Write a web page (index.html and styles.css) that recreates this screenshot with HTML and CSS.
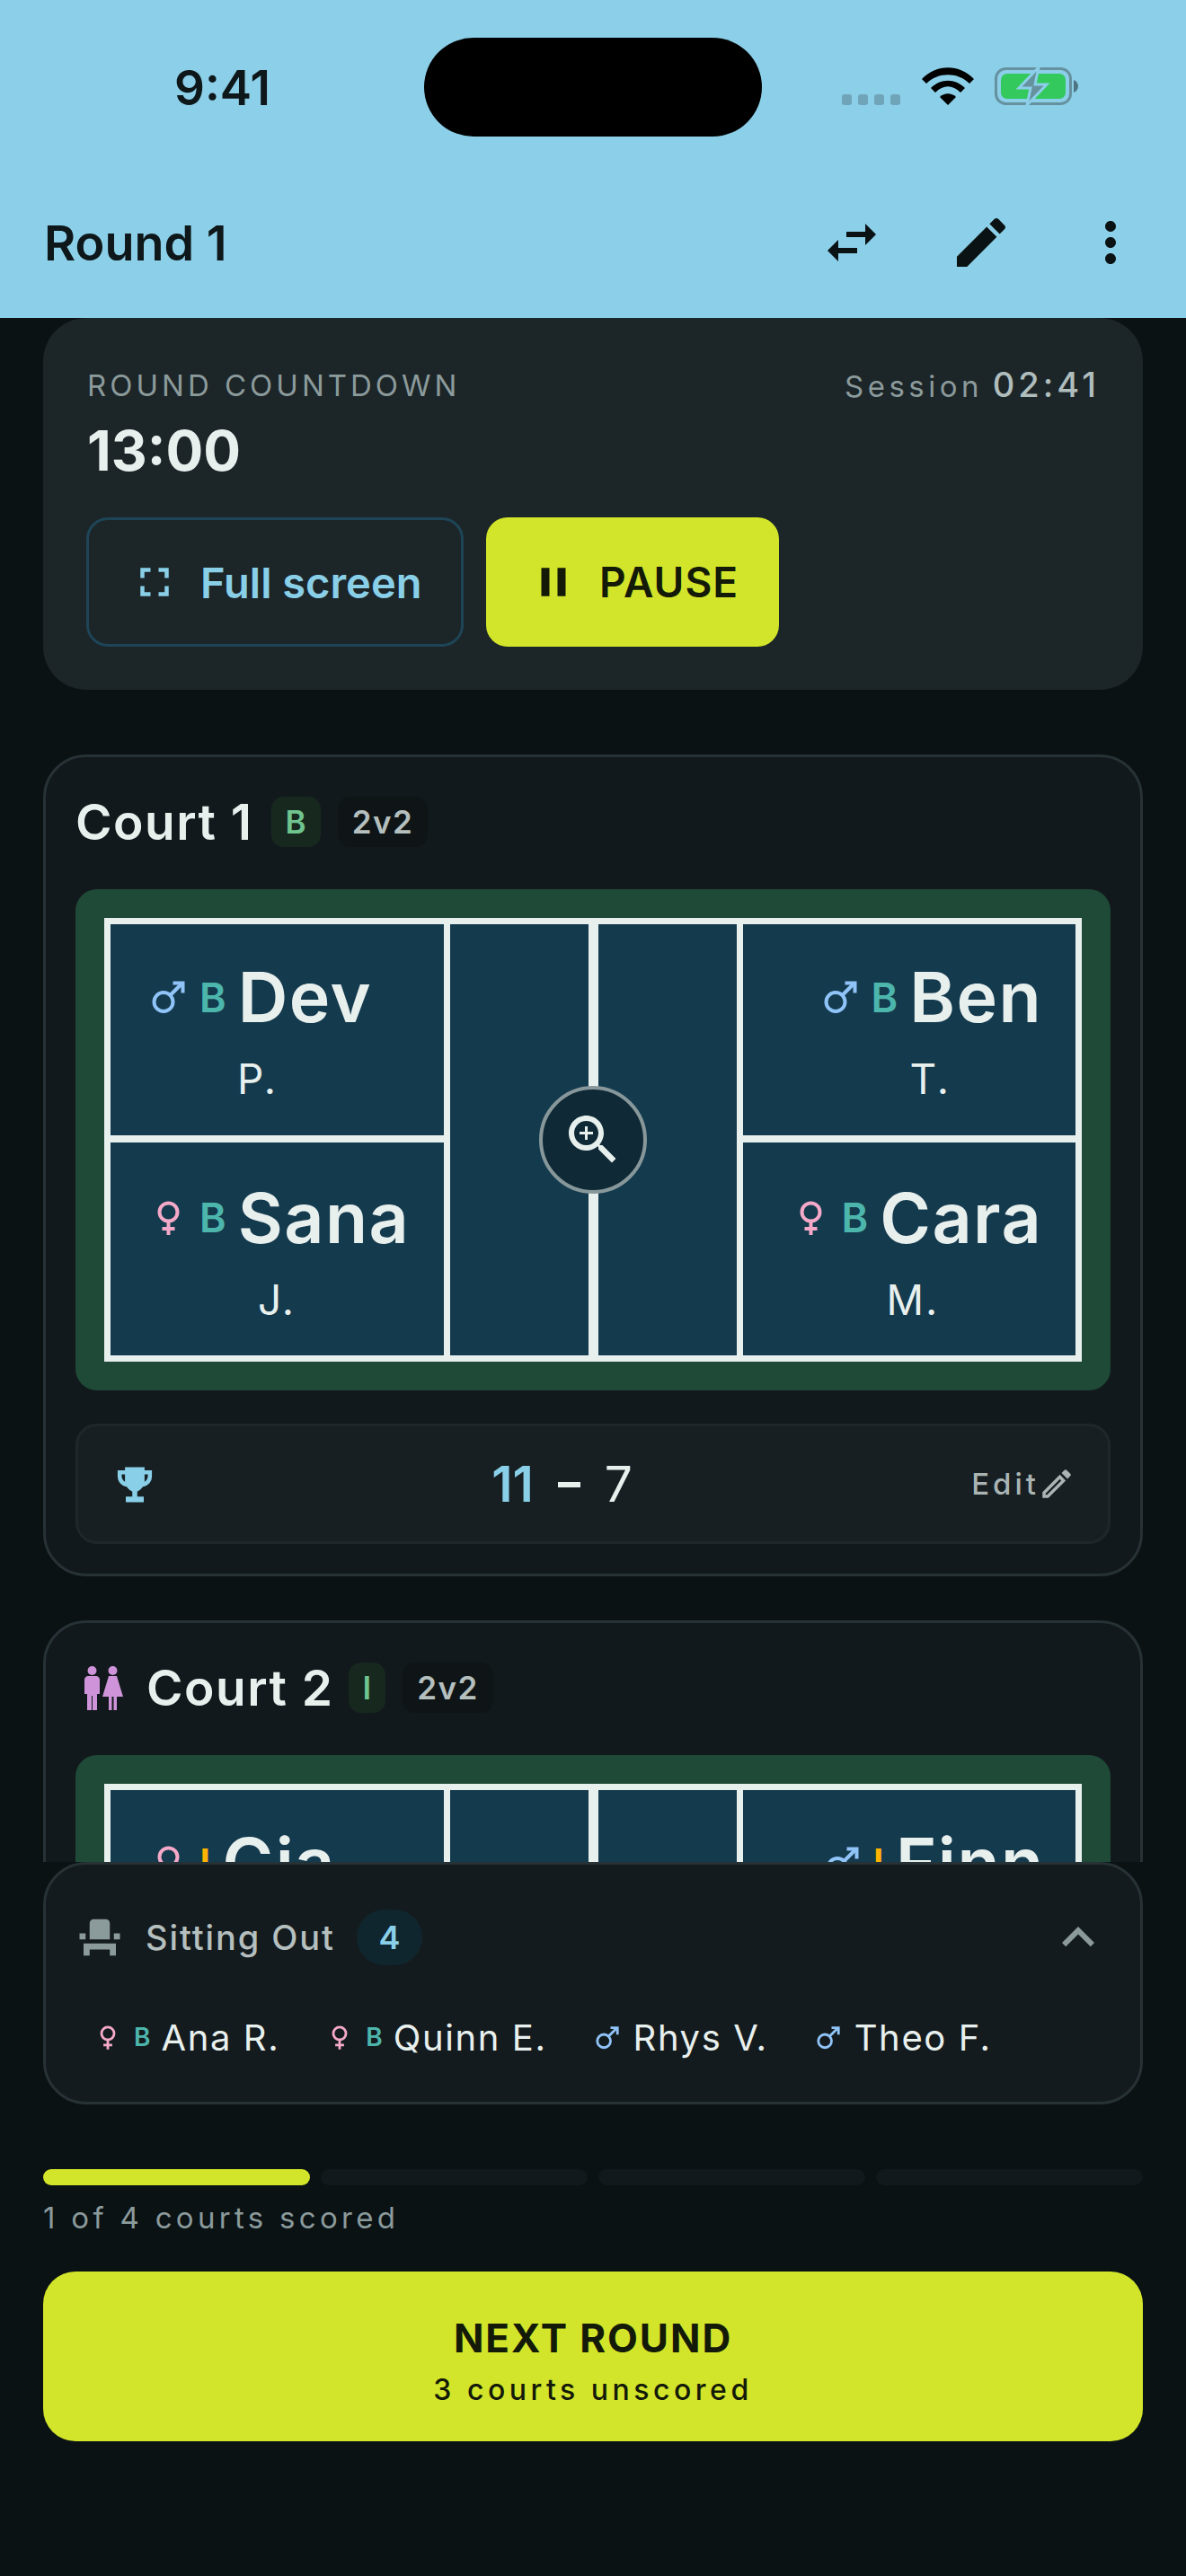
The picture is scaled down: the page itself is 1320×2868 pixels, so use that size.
FILE: index.html
```html
<!DOCTYPE html>
<html>
<head>
  <title>Round 1</title>
  <link rel="stylesheet" href="styles.css">
</head>
<body>

<svg class="defs">
  <symbol id="male" viewBox="0 0 37 38">
    <circle cx="13" cy="24.5" r="10.5" fill="none" stroke-width="4"/>
    <path d="M20.5 17 L33 4.5" fill="none" stroke-width="4"/>
    <path d="M23.5 3.5 H34.5 V14.5" fill="none" stroke-width="4"/>
  </symbol>
  <symbol id="female" viewBox="0 0 37 38">
    <circle cx="18.5" cy="12.5" r="10" fill="none" stroke-width="4"/>
    <path d="M18.5 23 V38 M11.5 31 H25.5" fill="none" stroke-width="4"/>
  </symbol>
</svg>

<div class="phone">

  <header class="appbar">
    <div class="status">
      <span class="clock">9:41</span>
      <div class="island"></div>
      <div class="status-icons">
        <svg class="signal" viewBox="0 0 66 12"><rect x="0" y="0" width="11" height="12" rx="3"/><rect x="18" y="0" width="11" height="12" rx="3"/><rect x="36" y="0" width="11" height="12" rx="3"/><rect x="54" y="0" width="11" height="12" rx="3"/></svg>
        <svg class="wifi" viewBox="0 0 58 42"><path d="M0 13 C16 -4 42 -4 58 13 L53 18 C40 5 18 5 5 18Z"/><path d="M10 23 C21 12 37 12 48 23 L43 28 C34 19 24 19 15 28Z"/><path d="M20 33 C25 28 33 28 38 33 L29 42Z"/></svg>
        <svg class="battery" viewBox="0 0 94 44">
          <rect x="1.5" y="2.5" width="83" height="39" rx="11" fill="none" stroke="#66919f" stroke-width="3"/>
          <rect x="7" y="8" width="72" height="28" rx="7" fill="#34c95c"/>
          <path d="M88 15 C91 16 93 19 93 22 C93 25 91 28 88 29Z" fill="#4f7583"/>
          <path d="M49 1 L27 24 H40 L36 43 L58 20 H45Z" fill="#66919f" stroke="#8bcfe8" stroke-width="3"/>
        </svg>
      </div>
    </div>
    <div class="toolbar">
      <h1>Round 1</h1>
      <div class="tool-icons">
        <svg class="tool" viewBox="0 0 24 24"><path d="M6.99 11L3 15l3.99 4v-3H14v-2H6.99v-3zM21 9l-3.99-4v3H10v2h7.01v3L21 9z"/></svg>
        <svg class="tool" viewBox="0 0 24 24"><path d="M3 17.25V21h3.75L17.81 9.94l-3.75-3.75L3 17.25zM20.71 7.04c.39-.39.39-1.02 0-1.41l-2.34-2.34c-.39-.39-1.02-.39-1.41 0l-1.83 1.83 3.75 3.75 1.83-1.83z"/></svg>
        <svg class="tool" viewBox="0 0 24 24"><path d="M12 8c1.1 0 2-.9 2-2s-.9-2-2-2-2 .9-2 2 .9 2 2 2zm0 2c-1.1 0-2 .9-2 2s.9 2 2 2 2-.9 2-2-.9-2-2-2zm0 6c-1.1 0-2 .9-2 2s.9 2 2 2 2-.9 2-2-.9-2-2-2z"/></svg>
      </div>
    </div>
  </header>

  <main class="scroll">

    <section class="timer">
      <div class="timer-top">
        <div>
          <div class="timer-label">ROUND COUNTDOWN</div>
          <div class="timer-value">13:00</div>
        </div>
        <div class="session">Session <b>02:41</b></div>
      </div>
      <div class="timer-btns">
        <div class="btn btn-outline">
          <svg class="btn-icon" viewBox="0 0 24 24" fill="#89cfe8"><path d="M7 14H5v5h5v-2H7v-3zm-2-4h2V7h3V5H5v5zm12 7h-3v2h5v-5h-2v3zM14 5v2h3v3h2V5h-5z"/></svg>
          Full screen
        </div>
        <div class="btn btn-solid">
          <svg class="btn-icon" viewBox="0 0 24 24" fill="#141a08"><path d="M6 19h4V5H6v14zm8-14v14h4V5h-4z"/></svg>
          PAUSE
        </div>
      </div>
    </section>

    <section class="card">
      <div class="card-head">
        <span class="card-title">Court 1</span>
        <span class="chip chip-level">B</span>
        <span class="chip">2v2</span>
      </div>
      <div class="court">
        <div class="lines">
          <div class="side side-left">
            <div class="box">
              <div class="who who-left"><svg class="sym male"><use href="#male"/></svg><span class="lvl">B</span><span class="first">Dev</span></div>
              <div class="last last-dev">P.</div>
            </div>
            <div class="box box-low">
              <div class="who who-left"><svg class="sym female"><use href="#female"/></svg><span class="lvl">B</span><span class="first">Sana</span></div>
              <div class="last last-sana">J.</div>
            </div>
          </div>
          <div class="kitchen"></div>
          <div class="net"></div>
          <div class="kitchen"></div>
          <div class="side side-right">
            <div class="box">
              <div class="who who-ben"><svg class="sym male"><use href="#male"/></svg><span class="lvl">B</span><span class="first">Ben</span></div>
              <div class="last last-ben">T.</div>
            </div>
            <div class="box box-low">
              <div class="who who-cara"><svg class="sym female"><use href="#female"/></svg><span class="lvl">B</span><span class="first">Cara</span></div>
              <div class="last last-cara">M.</div>
            </div>
          </div>
          <div class="zoom-btn">
            <svg viewBox="0 0 24 24" fill="#e8f0ee"><path d="M15.5 14h-.79l-.28-.27C15.41 12.59 16 11.11 16 9.5 16 5.91 13.09 3 9.5 3S3 5.91 3 9.5 5.91 16 9.5 16c1.61 0 3.09-.59 4.23-1.57l.27.28v.79l5 4.99L20.49 19l-4.99-5zm-6 0C7.01 14 5 11.99 5 9.5S7.01 5 9.5 5 14 7.01 14 9.5 11.99 14 9.5 14z"/><path d="M12 10h-2v2H9v-2H7V9h2V7h1v2h2v1z"/></svg>
          </div>
        </div>
      </div>
      <div class="score">
        <svg class="trophy" viewBox="0 0 44 44"><path d="M10 1 H34 V5 H43 V12 C43 19 38 24 32 25 C30 28 27 30 25 31 V37 H33 V44 H11 V37 H19 V31 C17 30 14 28 12 25 C6 24 1 19 1 12 V5 H10Z M10 10 H6 V12 C6 15 8 18 10 19Z M34 10 V19 C36 18 38 15 38 12 V10Z" fill-rule="evenodd"/></svg>
        <div class="score-nums"><b>11</b><i></i><span>7</span></div>
        <div class="edit">Edit
          <svg viewBox="0 0 24 24" fill="#a9b4b3"><path d="M3 17.25V21h3.75L17.81 9.94l-3.75-3.75L3 17.25zM5.92 19H5v-.92l9.06-9.06.92.92L5.92 19zM20.71 7.04c.39-.39.39-1.02 0-1.41l-2.34-2.34c-.39-.39-1.02-.39-1.41 0l-1.83 1.83 3.75 3.75 1.83-1.83z"/></svg>
        </div>
      </div>
    </section>

    <section class="card">
      <div class="card-head">
        <svg class="wc" viewBox="0 0 43 49" fill="#ce93d8"><circle cx="8.5" cy="5" r="5"/><circle cx="31.5" cy="5" r="5"/><path d="M0 15 C0 13 2 11 4 11 H13 C15 11 17 13 17 15 V31 H14 V49 H9 V33 H8 V49 H3 V31 H0Z"/><path d="M27 11 H36 L43 34 H36 V49 H32.5 V34 H30.5 V49 H27 V34 H20Z"/></svg>
        <span class="card-title card-title-tight">Court 2</span>
        <span class="chip chip-level">I</span>
        <span class="chip">2v2</span>
      </div>
      <div class="court">
        <div class="lines">
          <div class="side side-left">
            <div class="box">
              <div class="who who-left"><svg class="sym female"><use href="#female"/></svg><span class="lvl lvl-i">I</span><span class="first">Gia</span></div>
            </div>
          </div>
          <div class="kitchen"></div>
          <div class="net"></div>
          <div class="kitchen"></div>
          <div class="side side-right">
            <div class="box">
              <div class="who who-finn"><svg class="sym male"><use href="#male"/></svg><span class="lvl lvl-i">I</span><span class="first">Finn</span></div>
            </div>
          </div>
        </div>
      </div>
    </section>

  </main>

  <footer class="dock">
    <section class="sitting">
      <div class="sit-head">
        <svg class="seat" viewBox="0 0 24 24"><path d="M4 18v3h3v-3h10v3h3v-6H4zm15-8h3v3h-3zM2 10h3v3H2zm15 3H7V5c0-1.1.9-2 2-2h6c1.1 0 2 .9 2 2v8z"/></svg>
        <span class="sit-title">Sitting Out</span>
        <span class="sit-count">4</span>
        <svg class="chev" viewBox="0 0 24 24"><path d="M12 8l-6 6 1.41 1.41L12 10.83l4.59 4.58L18 14z"/></svg>
      </div>
      <div class="sit-list">
        <span class="sit-item"><svg class="sym female"><use href="#female"/></svg><span class="lvl">B</span>Ana R.</span>
        <span class="sit-item"><svg class="sym female"><use href="#female"/></svg><span class="lvl">B</span>Quinn E.</span>
        <span class="sit-item"><svg class="sym male"><use href="#male"/></svg>Rhys V.</span>
        <span class="sit-item"><svg class="sym male"><use href="#male"/></svg>Theo F.</span>
      </div>
    </section>

    <div class="progress">
      <div class="seg seg-on"></div>
      <div class="seg"></div>
      <div class="seg"></div>
      <div class="seg"></div>
    </div>
    <div class="progress-text">1 of 4 courts scored</div>

    <div class="next">
      <div class="next-main">NEXT ROUND</div>
      <div class="next-sub">3 courts unscored</div>
    </div>
  </footer>

</div>

</body>
</html>
```

FILE: styles.css
```css
html, body {
  margin: 0;
  padding: 0;
}
body {
  font-family: Inter, 'Noto Sans', sans-serif;
  background-color: #0a1214;
}
.defs {
  display: none;
}
.phone {
  width: 1320px;
  height: 2868px;
  display: flex;
  flex-direction: column;
  overflow: hidden;
  background-color: #0a1214;
  color: #e8f0ee;
}

/* top bar */
.appbar {
  flex: none;
  height: 354px;
  background-color: #8bcfe8;
  color: #0e1719;
}
.status {
  height: 186px;
  display: flex;
  position: relative;
}
.clock {
  margin: 68px 0 0 194px;
  font-size: 53px;
  font-weight: 600;
  line-height: 60px;
}
.island {
  position: absolute;
  left: 472px;
  top: 42px;
  width: 376px;
  height: 110px;
  border-radius: 55px;
  background-color: #000;
}
.status-icons {
  position: absolute;
  left: 937px;
  top: 75px;
  display: flex;
  align-items: flex-start;
}
.signal {
  width: 66px;
  height: 12px;
  margin-top: 30px;
  fill: #70a5b9;
}
.wifi {
  width: 58px;
  height: 42px;
  margin-left: 23px;
}
.battery {
  width: 94px;
  height: 44px;
  margin: -1px 0 0 23px;
}
.toolbar {
  display: flex;
  align-items: center;
  justify-content: space-between;
  padding: 0 48px 0 49px;
  height: 168px;
}
.toolbar h1 {
  margin: 0;
  font-size: 54px;
  font-weight: 600;
}
.tool-icons {
  display: flex;
  align-items: center;
  gap: 72px;
}
.tool {
  width: 72px;
  height: 72px;
  fill: #0a1214;
}

/* scrolling part */
.scroll {
  flex: none;
  height: 1719px;
  padding: 0 48px;
  overflow: hidden;
}
.timer {
  height: 414px;
  box-sizing: border-box;
  padding: 55px 48px 0;
  background-color: #1c2528;
  border-radius: 48px;
  margin-bottom: 72px;
}
.timer-top {
  display: flex;
  justify-content: space-between;
}
.timer-label {
  margin-left: 1px;
  font-size: 33px;
  line-height: 40px;
  letter-spacing: 4px;
  color: #8b9a9b;
}
.timer-value {
  margin: 15px 0 0 1px;
  font-size: 62px;
  line-height: 76px;
  font-weight: 700;
}
.session {
  font-size: 33px;
  line-height: 38px;
  letter-spacing: 4.5px;
  word-spacing: -3px;
  color: #8b9a9b;
}
.session b {
  font-size: 38px;
  font-weight: 500;
  letter-spacing: 4px;
  color: #b0bdbd;
}
.timer-btns {
  display: flex;
  gap: 25px;
  margin-top: 36px;
}
.btn {
  height: 144px;
  box-sizing: border-box;
  display: flex;
  align-items: center;
  border-radius: 24px;
  font-weight: 600;
}
.btn-outline {
  width: 420px;
  padding-left: 46px;
  gap: 24px;
  border: 3px solid #1e4557;
  color: #89cfe8;
  font-size: 47px;
}
.btn-solid {
  width: 326px;
  padding-left: 48px;
  gap: 24px;
  background-color: #d2e52a;
  color: #141a08;
  font-size: 46px;
  letter-spacing: 1px;
}
.btn-icon {
  width: 54px;
  height: 54px;
}

.card {
  box-sizing: border-box;
  height: 915px;
  padding: 33px 33px 0;
  margin-bottom: 49px;
  background-color: #12191c;
  border: 3px solid #273236;
  border-radius: 48px;
}
.card-head {
  display: flex;
  align-items: center;
  height: 78px;
  margin-bottom: 36px;
}
.card-title {
  font-size: 55px;
  font-weight: 600;
  letter-spacing: 1.5px;
  margin-right: 20px;
}
.card-title-tight {
  margin-right: 16px;
}
.chip {
  height: 56px;
  padding: 0 16px;
  display: flex;
  align-items: center;
  border-radius: 14px;
  background-color: #0f1516;
  color: #b4bfbe;
  font-size: 35px;
  font-weight: 600;
  letter-spacing: 1.5px;
  margin-right: 19px;
}
.chip-level {
  background-color: #17291f;
  color: #6fc48f;
  letter-spacing: 0;
}
.wc {
  width: 43px;
  height: 49px;
  margin: 0 26px 0 10px;
}

/* court drawing */
.court {
  background-color: #1f4a37;
  border-radius: 24px;
  padding: 32px;
  height: 558px;
  box-sizing: border-box;
}
.lines {
  position: relative;
  display: grid;
  grid-template-columns: 1fr 154px 11px 154px 1fr;
  height: 100%;
  box-sizing: border-box;
  border: 7px solid #e8f0ee;
  background-color: #e8f0ee;
}
.side {
  display: flex;
  flex-direction: column;
  gap: 8px;
}
.side-left {
  margin-right: 7px;
}
.side-right {
  margin-left: 7px;
}
.box {
  flex: 1;
  box-sizing: border-box;
  padding-top: 43px;
  background-color: #143a4e;
}
.box-low {
  padding-top: 46px;
}
.kitchen {
  background-color: #143a4e;
}
.net {
  background-color: #e8f0ee;
}
.who {
  display: flex;
  align-items: center;
  height: 76px;
}
.who-left {
  margin-left: 46px;
}
.who-ben {
  margin-left: 90px;
}
.who-cara {
  margin-left: 57px;
}
.who-finn {
  margin-left: 92px;
}
.sym {
  flex: none;
}
.who .sym {
  width: 37px;
  height: 38px;
  margin-right: 16px;
}
.male {
  stroke: #90c4f9;
}
.female {
  stroke: #f4a9c8;
}
.lvl {
  color: #4db6ac;
  font-weight: 600;
}
.lvl-i {
  color: #ffb300;
}
.who .lvl {
  font-size: 45px;
  margin-right: 13px;
}
.first {
  font-size: 77px;
  font-weight: 600;
  letter-spacing: 1.5px;
}
.last {
  font-size: 46px;
  line-height: 46px;
  letter-spacing: 2px;
  margin-top: 30px;
}
.last-dev {
  margin-left: 141px;
}
.last-sana {
  margin-left: 164px;
}
.last-ben {
  margin-left: 186px;
}
.last-cara {
  margin-left: 160px;
}
.zoom-btn {
  position: absolute;
  left: 50%;
  top: 50%;
  width: 120px;
  height: 120px;
  margin: -60px 0 0 -60px;
  box-sizing: border-box;
  border: 4px solid #87979a;
  border-radius: 50%;
  background-color: #0f2a36;
  display: flex;
  align-items: center;
  justify-content: center;
}
.zoom-btn svg {
  width: 72px;
  height: 72px;
}

/* score row */
.score {
  height: 134px;
  box-sizing: border-box;
  margin-top: 37px;
  padding: 0 36px 0 43px;
  display: flex;
  align-items: center;
  background-color: #171f22;
  border: 3px solid #1e272a;
  border-radius: 24px;
}
.trophy {
  width: 40px;
  height: 41px;
  fill: #89cfe8;
}
.score-nums {
  flex: 1;
  display: flex;
  justify-content: center;
  align-items: center;
  gap: 27px;
  font-size: 55px;
}
.score-nums b {
  color: #89cfe8;
  font-weight: 600;
}
.score-nums i {
  width: 25px;
  height: 6px;
  margin-top: 2px;
  background-color: #e8f0ee;
}
.edit {
  display: flex;
  align-items: center;
  font-size: 33px;
  font-weight: 500;
  letter-spacing: 4px;
  color: #a9b4b3;
}
.edit svg {
  width: 42px;
  height: 42px;
  margin-left: -2px;
}

/* bottom part, sits under the list */
.dock {
  flex: 1;
  padding: 0 48px;
  background-color: #0a1214;
  z-index: 1;
}
.sitting {
  height: 270px;
  box-sizing: border-box;
  padding: 39px 33px 0;
  background-color: #141b1e;
  border: 3px solid #273236;
  border-radius: 48px;
}
.sit-head {
  display: flex;
  align-items: center;
  height: 84px;
}
.seat {
  width: 54px;
  height: 54px;
  fill: #8b9a9b;
}
.sit-title {
  margin-left: 24px;
  font-size: 38px;
  font-weight: 500;
  letter-spacing: 1.9px;
  color: #b4bfbe;
}
.sit-count {
  margin-left: 24px;
  width: 73px;
  height: 62px;
  border-radius: 31px;
  background-color: #10262e;
  color: #89cfe8;
  font-size: 36px;
  font-weight: 600;
  display: flex;
  align-items: center;
  justify-content: center;
}
.chev {
  margin-left: auto;
  width: 72px;
  height: 72px;
  fill: #8b9a9b;
}
.sit-list {
  display: flex;
  gap: 54px;
  margin-top: 45px;
  padding-left: 23px;
}
.sit-item {
  display: flex;
  align-items: center;
  height: 48px;
  font-size: 40px;
  letter-spacing: 1.6px;
  white-space: nowrap;
}
.sit-item .sym {
  width: 26px;
  height: 27px;
  margin-right: 16px;
}
.sit-item .lvl {
  font-size: 28px;
  letter-spacing: 0;
  margin-right: 12px;
}

/* progress and next */
.progress {
  display: flex;
  gap: 12px;
  margin-top: 72px;
}
.seg {
  flex: 1;
  height: 18px;
  border-radius: 9px;
  background-color: #12191c;
}
.seg-on {
  background-color: #d2e52a;
}
.progress-text {
  margin-top: 16px;
  font-size: 33px;
  line-height: 40px;
  letter-spacing: 4.3px;
  color: #8b9a9b;
}
.next {
  margin-top: 40px;
  height: 189px;
  box-sizing: border-box;
  padding-top: 46px;
  border-radius: 36px;
  background-color: #d2e52a;
  color: #141a08;
  display: flex;
  flex-direction: column;
  align-items: center;
}
.next-main {
  font-size: 44px;
  line-height: 56px;
  font-weight: 700;
  letter-spacing: 1.9px;
}
.next-sub {
  margin-top: 10px;
  font-size: 32px;
  line-height: 40px;
  font-weight: 500;
  letter-spacing: 4.5px;
}
```
